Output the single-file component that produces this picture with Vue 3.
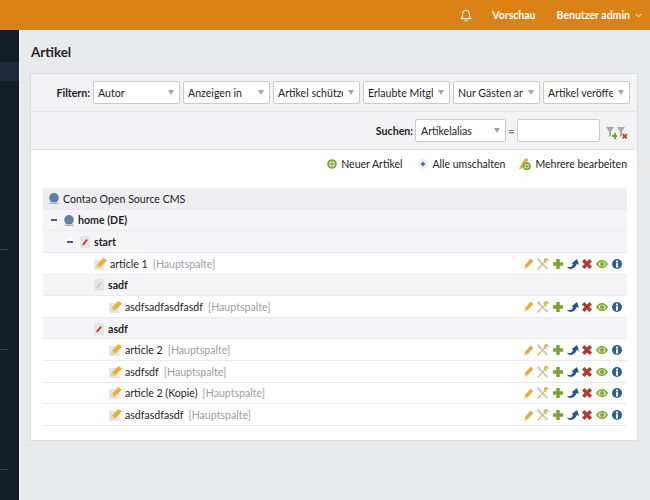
<script setup>
const filters = ['Autor', 'Anzeigen in', 'Artikel schützen', 'Erlaubte Mitglieder', 'Nur Gästen anzeigen', 'Artikel veröffentlichen']
const rows = [
  { kind: 'root', text: 'Contao Open Source CMS' },
  { kind: 'page', text: 'home (DE)', indent: 6, toggle: true, icon: 'globe' },
  { kind: 'page', text: 'start', indent: 22, toggle: true, icon: 'pagered' },
  { kind: 'art', text: 'article 1', tag: '[Hauptspalte]', indent: 51 },
  { kind: 'page', text: 'sadf', indent: 51, icon: 'pagegrey' },
  { kind: 'art', text: 'asdfsadfasdfasdf', tag: '[Hauptspalte]', indent: 66 },
  { kind: 'page', text: 'asdf', indent: 51, icon: 'pagered' },
  { kind: 'art', text: 'article 2', tag: '[Hauptspalte]', indent: 66 },
  { kind: 'art', text: 'asdfsdf', tag: '[Hauptspalte]', indent: 66 },
  { kind: 'art', text: 'article 2 (Kopie)', tag: '[Hauptspalte]', indent: 66 },
  { kind: 'art', text: 'asdfasdfasdf', tag: '[Hauptspalte]', indent: 66 },
]
const actions = ['pencil', 'tools', 'plus', 'move', 'cross', 'eye', 'info']
</script>

<template>
  <div class="app">
    <svg class="defs" width="0" height="0">
      <symbol id="pencil" viewBox="0 0 10 11"><path d="M.6 9l.5-2.200L6.600.6l2.800 2.400-5.600 6.200z" fill="#e6ae40"/><path d="M0 11l.8-3.400 2.800 2.400z" fill="#f3d68c"/></symbol>
      <symbol id="tools" viewBox="0 0 12 12"><path d="M.8 0l2.100.9.300 1.400 8 7.900-1.500 1.500-7.900-8L.9 3.400 0 1z" fill="#c9cbc8"/><path d="M8.500 0a3 3 0 0 1 3.400 3.200l-1.700-1L9 3.400l1 1.600a3 3 0 0 1-2.500-.4L2 11l-1.300 1-.7-.8L1.200 9.800 7 4a3 3 0 0 1 1.500-4z" fill="#dcb567"/></symbol>
      <symbol id="plus" viewBox="0 0 10 10"><path d="M3.300 0h3.400v3.300H10v3.400H6.700V10H3.300V6.700H0V3.300h3.300z" fill="#7aa32c"/></symbol>
      <symbol id="move" viewBox="0 0 12 10"><path d="M0 7.800c2.800.8 5 .2 6.200-2.900L4.600 4.200 10 0l2 5.800-2.200-.7C8.700 8.500 5.700 10.400 2.600 9.800 1.500 9.600.5 8.900 0 7.800z" fill="#27578f"/></symbol>
      <symbol id="cross" viewBox="0 0 10 10"><path d="M2.400 0L5 2.600 7.600 0 10 2.400 7.400 5 10 7.600 7.600 10 5 7.400 2.400 10 0 7.600 2.600 5 0 2.400z" fill="#b23a2d"/></symbol>
      <symbol id="eye" viewBox="0 0 12 8"><path d="M6 0c2.700 0 4.800 1.700 6 4-1.200 2.300-3.300 4-6 4S1.200 6.300 0 4c1.200-2.300 3.300-4 6-4z" fill="#7fa82f"/><ellipse cx="6" cy="4" rx="3.600" ry="2.500" fill="#dbe7bd"/><circle cx="6" cy="4" r="2" fill="#7fa82f"/></symbol>
      <symbol id="info" viewBox="0 0 10 10"><circle cx="5" cy="5" r="5" fill="#2b5f97"/><rect x="4" y="1.600" width="2" height="1.800" fill="#fff"/><rect x="4" y="4.200" width="2" height="4.400" fill="#fff"/></symbol>
      <symbol id="globe" viewBox="0 0 10 11"><circle cx="5" cy="4.800" r="4.800" fill="#5d7fa8"/><path d="M.5 9.600h9V11h-9z" fill="#a9b4bd"/></symbol>
      <symbol id="pagered" viewBox="0 0 10 12"><path d="M0 0h8l2 2v10H0z" fill="#e5e5e5"/><path d="M2.300 9.500l.5-2L6.500 3l1.300 1.200-3.600 4.500z" fill="#b5392c"/></symbol>
      <symbol id="pagegrey" viewBox="0 0 10 12"><path d="M0 0h8l2 2v10H0z" fill="#e5e5e5"/><path d="M2.300 9.500l.5-2L6.500 3l1.300 1.200-3.600 4.500z" fill="#c9c9c9"/></symbol>
      <symbol id="article" viewBox="0 0 13 12"><path d="M0 2h10.500v10H0z" fill="#e6e6e6"/><path d="M2.200 9.500l.8-2.700L9.400 0 13 2.600 6 9.500z" fill="#e9ae3a"/><path d="M2.200 9.500l.8-2.700 2.800 2z" fill="#f5dc9b"/></symbol>
    </svg>

    <header class="topbar">
      <svg class="bell" width="12" height="13" viewBox="0 0 12 13"><path d="M6 1.200a3.300 3.300 0 0 0-3.300 3.300c0 3.500-1.200 4.500-1.700 5.200h10c-.5-.7-1.700-1.700-1.700-5.200A3.300 3.300 0 0 0 6 1.200zM4.600 11a1.500 1.500 0 0 0 2.800 0" fill="none" stroke="#fff" stroke-width="1"/></svg>
      <span class="toplink preview">Vorschau</span>
      <span class="toplink">Benutzer admin</span>
      <svg class="chev" width="7" height="5" viewBox="0 0 7 5"><path d="M.7 1l2.800 2.800L6.300 1" fill="none" stroke="#fff" stroke-width="1"/></svg>
    </header>

    <div class="body">
      <aside class="side">
        <div class="side-active"></div>
        <div class="side-line l1"></div>
        <div class="side-line l2"></div>
        <div class="side-line l3"></div>
      </aside>

      <main class="main">
        <h1 class="title">Artikel</h1>
        <section class="panel">
          <div class="bar filter-bar">
            <strong class="label">Filtern:</strong>
            <div v-for="f in filters" :key="f" class="select">
              <span class="select-text">{{ f }}</span><i class="caret"></i>
            </div>
          </div>
          <div class="bar search-bar">
            <strong class="label">Suchen:</strong>
            <div class="select search-select"><span class="select-text">Artikelalias</span><i class="caret"></i></div>
            <span class="equals">=</span>
            <div class="input"></div>
            <div class="funnels">
              <svg width="11" height="13" viewBox="0 0 11 13"><path d="M0 0h8L5 4.500V9L3 10V4.500z" fill="#a9a9a9"/><path d="M6 8h2V6h2v2h1v2h-1v2H8v-2H6z" fill="#78a32e"/></svg>
              <svg width="12" height="13" viewBox="0 0 12 13"><path d="M0 0h8L5 4.500V9L3 10V4.500z" fill="#a9a9a9"/><path d="M5 7.500l1-1 1.500 1.500L9 6.500l1.500 1L9 9.200l1.500 1.500-1.500 1.300L7.500 10.500 6 12l-1-1.300 1.500-1.500z" fill="#b5392c"/></svg>
            </div>
          </div>
          <div class="content">
            <div class="buttons">
              <span class="btn btn-new">
                <svg width="10" height="10" viewBox="0 0 11 11"><circle cx="5.500" cy="5.500" r="4.200" fill="none" stroke="#7ba52f" stroke-width="2.200"/><path d="M5.500 3v5M3 5.500h5" stroke="#7ba52f" stroke-width="1.500"/></svg>
                Neuer Artikel
              </span>
              <span class="btn">
                <svg width="10" height="10" viewBox="0 0 11 11"><circle cx="5.500" cy="5.500" r="5.500" fill="#eef0f4"/><path d="M5.500 3v5M3 5.500h5" stroke="#3d5f95" stroke-width="1.600"/></svg>
                Alle umschalten
              </span>
              <span class="btn">
                <svg width="12" height="14" viewBox="0 0 13 14"><path d="M0 13l1.500-4L6 1.500 9 0.500 10 3l-5 8z" fill="#e2ad4c"/><circle cx="8.500" cy="9.500" r="3.400" fill="#fff" stroke="#7ba52f" stroke-width="1.800"/><path d="M8.500 7.500v4M6.500 9.500h4" stroke="#7ba52f" stroke-width="1.300"/></svg>
                Mehrere bearbeiten
              </span>
            </div>

            <div class="tree">
              <div v-for="(r, i) in rows" :key="i" class="row" :class="'row-' + r.kind" :style="{ paddingLeft: (r.indent || 0) + 'px' }">
                <i v-if="r.toggle" class="toggle"></i>
                <svg v-if="r.kind === 'root'" class="ricon globe" width="10" height="11"><use href="#globe"/></svg>
                <svg v-else-if="r.icon" class="ricon" :class="{ globe: r.icon === 'globe' }" width="10" :height="r.icon === 'globe' ? 11 : 12"><use :href="'#' + r.icon"/></svg>
                <svg v-else class="ricon art-icon" width="13" height="12"><use href="#article"/></svg>
                <span class="rtext">{{ r.text }}</span>
                <span v-if="r.tag" class="tag">{{ r.tag }}</span>
                <span v-if="r.kind === 'art'" class="actions">
                  <span v-for="a in actions" :key="a" class="cell"><svg class="act" :class="'a-' + a"><use :href="'#' + a"/></svg></span>
                </span>
              </div>
            </div>
          </div>
        </section>
      </main>
    </div>
  </div>
</template>

<style>
html, body { margin: 0; background: #e9eaec; }
</style>

<style scoped>
.app { width: 650px; height: 500px; overflow: hidden; font-family: Lato, "Open Sans", sans-serif; color: #222; display: flex; flex-direction: column; }
.defs { position: absolute; }
.topbar { height: 30px; flex: none; background: #db8216; color: #fff; display: flex; align-items: center; justify-content: flex-end; padding-right: 8px; font-size: 10.500px; font-weight: 700; }
.bell { margin-right: 20px; }
.preview { margin-right: 21px; }
.chev { margin-left: 5px; }
.body { flex: 1; display: flex; min-height: 0; }
.side { width: 19px; flex: none; background: #141c26; position: relative; border-right: 1px solid #f4f5f7; }
.side-active { position: absolute; left: 0; right: 0; top: 32px; height: 19px; background: #1c2a3c; }
.side-line { position: absolute; left: 0; width: 8px; height: 1px; background: #3a424c; }
.l1 { top: 219px; }
.l2 { top: 319px; }
.l3 { top: 439px; }
.main { flex: 1; padding: 0 12px 0 10px; }
.title { margin: 14px 0 13px 1px; font-size: 13.400px; line-height: 16px; font-weight: 700; color: #1f1f1f; }
.panel { background: #fff; border: 1px solid #dcdddf; height: 368px; box-sizing: border-box; width: 608px; }
.bar { background: #f3f3f5; display: flex; align-items: center; justify-content: flex-end; box-sizing: border-box; border-bottom: 1px solid #e2e3e5; }
.filter-bar { height: 38px; padding-right: 7px; gap: 3px; }
.search-bar { height: 38px; padding: 0 7px 0 0; }
.label { font-size: 10.600px; font-weight: 700; color: #222; }
.select { width: 87px; height: 23px; box-sizing: border-box; background: #fff; border: 1px solid #c9cacc; border-radius: 2px; display: flex; align-items: center; padding: 0 6px 0 4px; font-size: 10.600px; position: relative; flex: none; }
.select-text { white-space: nowrap; overflow: hidden; width: 65px; color: #222; }
.caret { position: absolute; right: 5px; top: 8px; border-left: 3.500px solid transparent; border-right: 3.500px solid transparent; border-top: 5px solid #a3a3a3; }
.search-bar .label { margin-right: 2px; }
.search-select { width: 91px; padding-left: 5px; }
.equals { width: 11px; text-align: center; font-size: 11px; font-weight: 700; color: #777; }
.input { width: 83px; height: 23px; box-sizing: border-box; background: #fff; border: 1px solid #c9cacc; border-radius: 2px; }
.funnels { display: flex; width: 30px; box-sizing: border-box; padding: 5px 1px 0 0; justify-content: flex-end; gap: 0; }
.content { padding: 0 10px 0 12px; }
.buttons { height: 38px; box-sizing: border-box; display: flex; justify-content: flex-end; align-items: center; font-size: 10.500px; color: #222; gap: 14px; padding-bottom: 10px; }
.btn { display: flex; align-items: center; gap: 4px; }
.btn-new { margin-right: 2px; }
.tree { display: flex; flex-direction: column; }
.row { height: 21.640px; box-sizing: border-box; display: flex; align-items: center; font-size: 10.600px; padding-top: 1px; border-bottom: 1px solid #ebebed; background: #fff; position: relative; }
.row-root { background: #eeeef0; padding-left: 6px !important; }
.row-page { background: #f5f5f7; font-weight: 700; }
.toggle { width: 9px; height: 9px; border-radius: 50%; background: #fff; position: relative; margin-right: 6px; flex: none; }
.toggle::after { content: ""; position: absolute; left: 1.500px; right: 1.500px; top: 3.500px; height: 2px; background: #3d5f95; }
.ricon { margin-right: 4px; flex: none; }
.art-icon { margin-right: 3px; }
.rtext { white-space: nowrap; }
.tag { color: #9a9ea3; margin-left: 5px; white-space: nowrap; font-weight: 400; }
.actions { margin-left: auto; display: flex; align-items: center; padding-right: 3px; }
.cell { width: 14.700px; height: 12px; display: flex; align-items: center; justify-content: center; }
.act { flex: none; }
.a-pencil { width: 10px; height: 11px; }
.a-tools { width: 12px; height: 12px; }
.a-plus { width: 10px; height: 10px; }
.a-move { width: 12px; height: 10px; }
.a-cross { width: 10px; height: 10px; }
.a-eye { width: 12px; height: 8px; }
.a-info { width: 10px; height: 10px; }
</style>
